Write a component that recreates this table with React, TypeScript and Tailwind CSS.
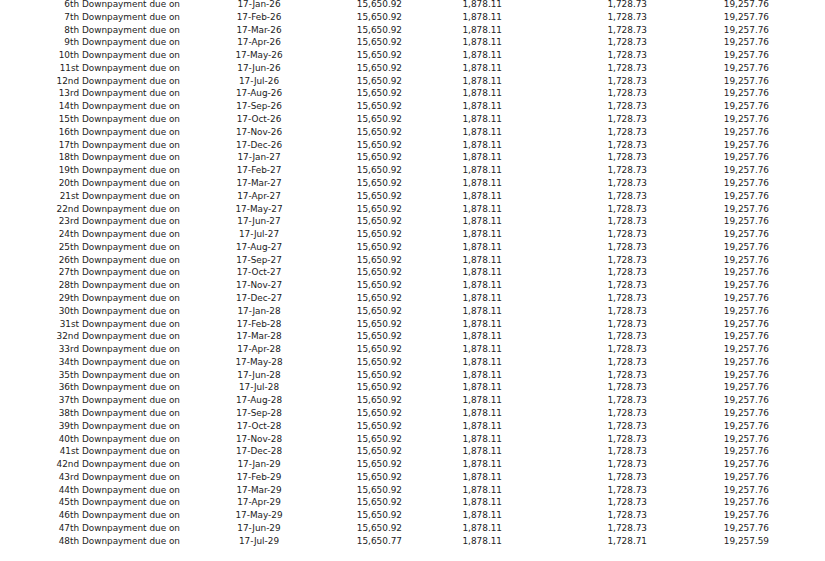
import React from 'react';

const months = ['Jan', 'Feb', 'Mar', 'Apr', 'May', 'Jun', 'Jul', 'Aug', 'Sep', 'Oct', 'Nov', 'Dec'];

interface Installment {
  label: string;
  dueDate: string;
  principal: string;
  interest: string;
  tax: string;
  total: string;
}

// suffix only looks at the last digit (11st, 12nd, 13rd...) like the source system
function ordinal(n: number) {
  const last = n % 10;
  if (last === 1) return `${n}st`;
  if (last === 2) return `${n}nd`;
  if (last === 3) return `${n}rd`;
  return `${n}th`;
}

function buildSchedule(): Installment[] {
  const rows: Installment[] = [];
  for (let n = 6; n <= 48; n++) {
    const offset = n - 6;
    const month = offset % 12;
    const year = 26 + Math.floor(offset / 12);
    const isLast = n === 48;
    rows.push({
      label: `${ordinal(n)} Downpayment due on`,
      dueDate: `17-${months[month]}-${year}`,
      principal: isLast ? '15,650.77' : '15,650.92',
      interest: '1,878.11',
      tax: isLast ? '1,728.71' : '1,728.73',
      total: isLast ? '19,257.59' : '19,257.76',
    });
  }
  return rows;
}

const schedule = buildSchedule();

function App() {
  return (
    <div
      className="min-h-[561px] w-[825px] bg-white text-[#222] text-[8.9px] overflow-hidden"
      style={{ fontFamily: '"DejaVu Sans", Verdana, sans-serif' }}
    >
      <div className="mt-[-2px] flex flex-col">
        {schedule.map((row) => (
          <div
            key={row.label}
            className="grid grid-cols-[180px_158px_64px_100px_145px_122px] h-[12.79px] leading-[12.79px] whitespace-nowrap"
          >
            <span className="text-right">{row.label}</span>
            <span className="text-center">{row.dueDate}</span>
            <span className="text-right">{row.principal}</span>
            <span className="text-right">{row.interest}</span>
            <span className="text-right">{row.tax}</span>
            <span className="text-right">{row.total}</span>
          </div>
        ))}
      </div>
    </div>
  );
}

export default App;
